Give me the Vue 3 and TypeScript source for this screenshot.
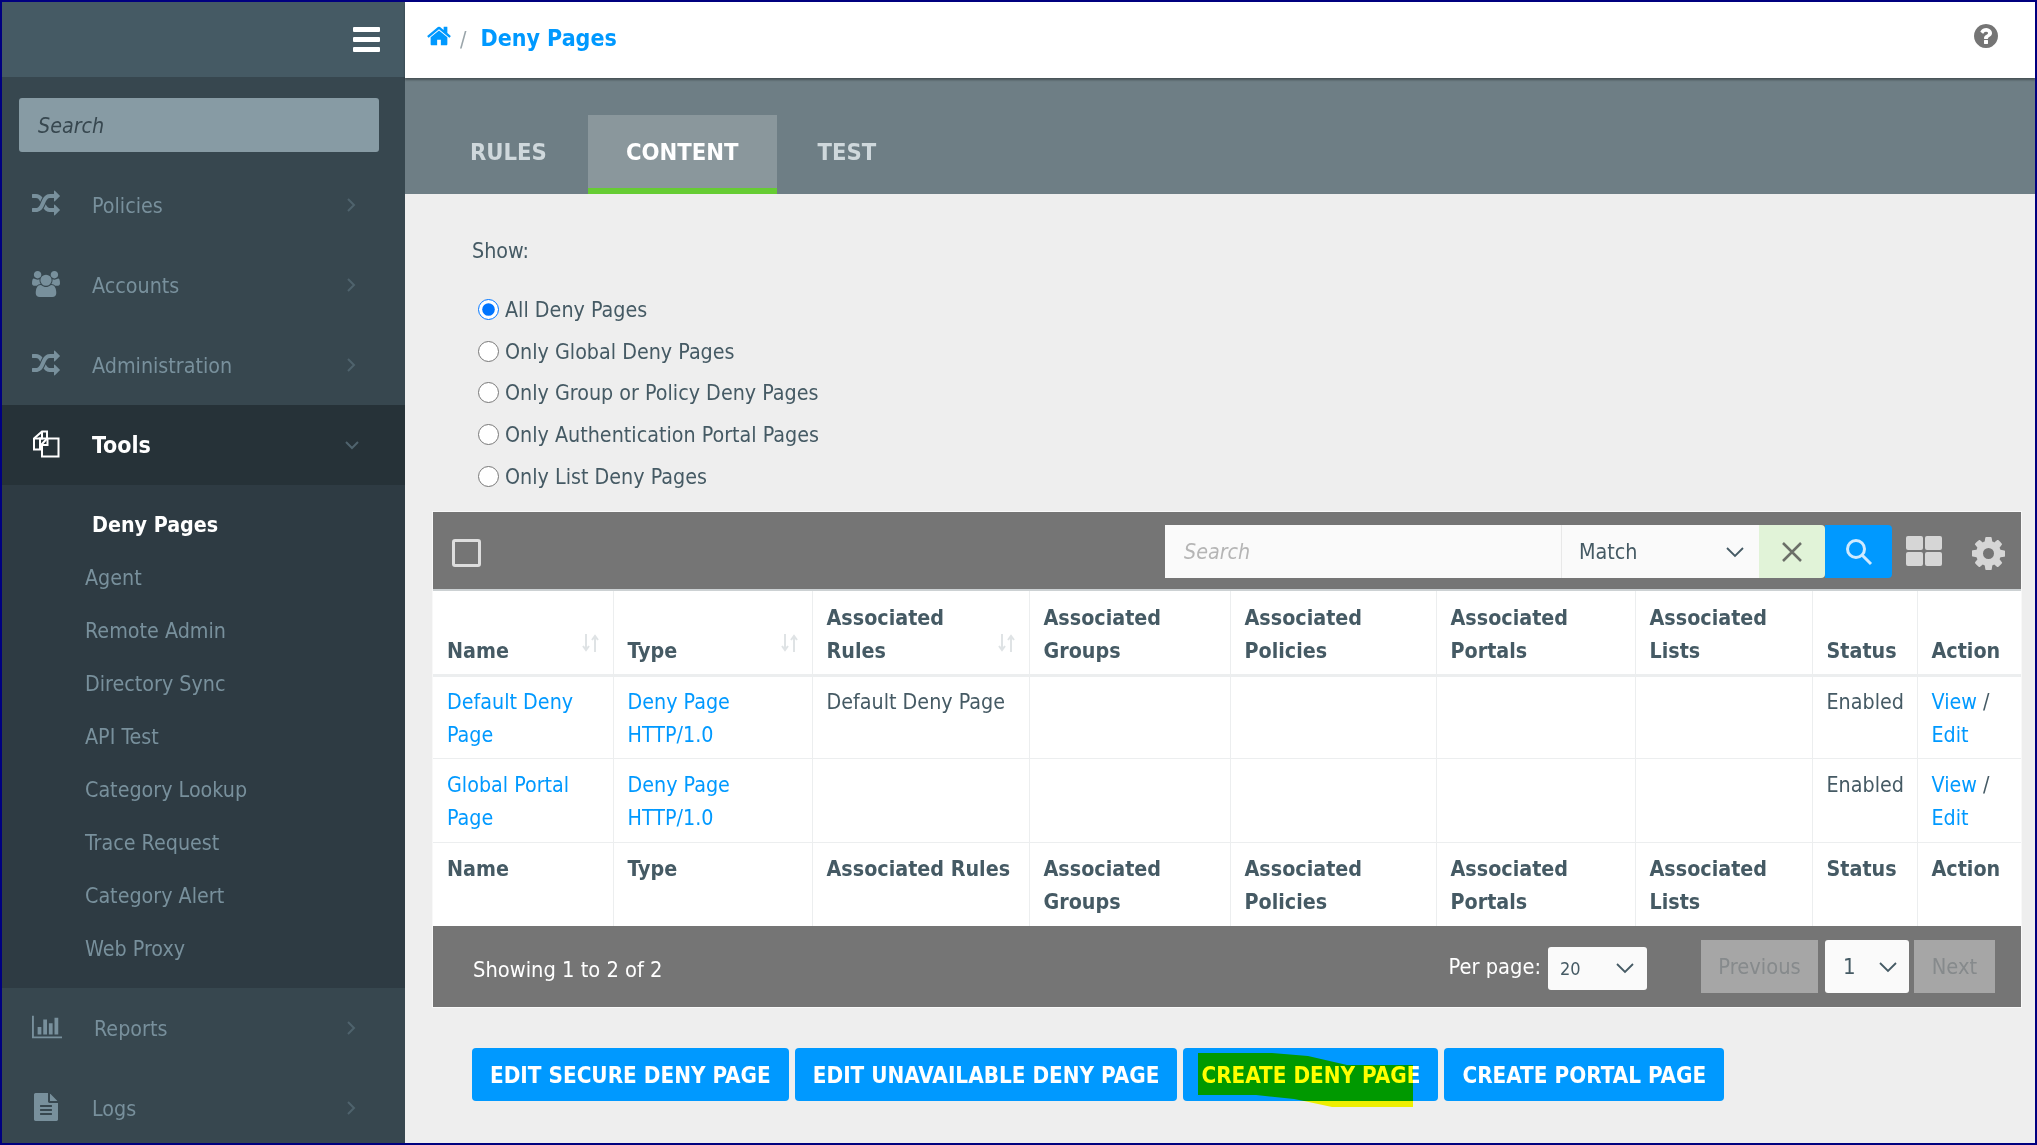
<script setup lang="ts">
const icons: Record<string, { box: string; d: string }> = {
  random: {
    box: '0 0 1792 1792',
    d: 'M666 481q-60 92-137 273-22-45-37-72.500t-40.500-63.500-51-56.500-63-35-81.500-14.500h-224q-14 0-23-9t-9-23v-192q0-14 9-23t23-9h224q250 0 410 225zm1126 799q0 14-9 23l-320 320q-9 9-23 9-13 0-22.500-9.500t-9.500-22.500v-192q-32 0-85 .5t-81 1-73-1-71-5-64-10.500-63-18.500-58-28.500-59-40-55-53.500-56-69.500q59-93 136-273 22 45 37 72.500t40.500 63.500 51 56.500 63 35 81.500 14.500h256v-192q0-14 9-23t23-9q12 0 24 10l319 319q9 9 9 23zm0-896q0 14-9 23l-320 320q-9 9-23 9-13 0-22.500-9.500t-9.500-22.500v-192h-256q-48 0-87 15t-69 45-51 61.500-45 77.500q-32 62-78 171-29 66-49.500 111t-54 105-64 100-74 83-90 68.500-106.500 42-128 16.500h-224q-14 0-23-9t-9-23v-192q0-14 9-23t23-9h224q48 0 87-15t69-45 51-61.500 45-77.500q32-62 78-171 29-66 49.500-111t54-105 64-100 74-83 90-68.500 106.500-42 128-16.500h256v-192q0-14 9-23t23-9q12 0 24 10l319 319q9 9 9 23z',
  },
  users: {
    box: '0 0 1920 1792',
    d: 'M593 896q-162 5-265 128h-134q-82 0-138-40.500t-56-118.500q0-353 124-353 6 0 43.500 21t97.500 42.500 119 21.500q67 0 133-23-5 37-5 66 0 139 81 256zm1071 637q0 120-73 189.500t-194 69.500h-874q-121 0-194-69.500t-73-189.500q0-53 3.500-103.500t14-109 26.500-108.500 43-97.500 62-81 85.500-53.500 111.500-20q10 0 43 21.500t73 48 107 48 135 21.500 135-21.500 107-48 73-48 43-21.500q61 0 111.500 20t85.500 53.500 62 81 43 97.500 26.500 108.500 14 109 3.500 103.500zm-1024-1277q0 106-75 181t-181 75-181-75-75-181 75-181 181-75 181 75 75 181zm704 384q0 159-112.500 271.500t-271.500 112.500-271.500-112.500-112.500-271.500 112.500-271.500 271.500-112.500 271.500 112.500 112.500 271.500zm576 225q0 78-56 118.500t-138 40.500h-134q-103-123-265-128 81-117 81-256 0-29-5-66 66 23 133 23 59 0 119-21.500t97.500-42.500 43.500-21q124 0 124 353zm-128-609q0 106-75 181t-181 75-181-75-75-181 75-181 181-75 181 75 75 181z',
  },
  chart: {
    box: '0 0 2048 1792',
    d: 'M640 896v512h-256v-512h256zm384-512v1024h-256v-1024h256zm1024 1152v128h-2048v-1536h128v1408h1920zm-640-896v768h-256v-768h256zm384-384v1152h-256v-1152h256z',
  },
  file: {
    box: '0 0 1792 1792',
    d: 'M1596 476q14 14 28 36h-472v-472q22 14 36 28zm-476 164h544v1056q0 40-28 68t-68 28h-1344q-40 0-68-28t-28-68v-1600q0-40 28-68t68-28h800v544q0 40 28 68t68 28zm160 736v-64q0-14-9-23t-23-9h-704q-14 0-23 9t-9 23v64q0 14 9 23t23 9h704q14 0 23-9t9-23zm0-256v-64q0-14-9-23t-23-9h-704q-14 0-23 9t-9 23v64q0 14 9 23t23 9h704q14 0 23-9t9-23zm0-256v-64q0-14-9-23t-23-9h-704q-14 0-23 9t-9 23v64q0 14 9 23t23 9h704q14 0 23-9t9-23z',
  },
}

const homePath = 'M1472 992v480q0 26-19 45t-45 19h-384v-384h-256v384h-384q-26 0-45-19t-19-45v-480q0-1 .5-3t.5-3l575-474 575 474q1 2 1 6zm223-69l-62 74q-8 9-21 11h-3q-13 0-21-7l-692-577-692 577q-12 8-24 7-13-2-21-11l-62-74q-8-10-7-23.500t11-21.500l719-599q32-26 76-26t76 26l244 204v-195q0-14 9-23t23-9h192q14 0 23 9t9 23v408l219 182q10 8 11 21.500t-7 23.500z'
const helpPath = 'M1024 1376v-192q0-14-9-23t-23-9h-192q-14 0-23 9t-9 23v192q0 14 9 23t23 9h192q14 0 23-9t9-23zm256-672q0-88-55.500-163t-138.500-116-170-41q-243 0-371 213-15 24 8 42l132 100q7 6 19 6 16 0 25-12 53-68 86-92 34-24 86-24 48 0 85.500 26t37.500 59q0 38-20 61t-68 45q-63 28-115.500 86.500t-52.500 125.500v36q0 14 9 23t23 9h192q14 0 23-9t9-23q0-19 21.500-49.500t54.500-49.500q32-18 49-28.500t46-35 44.500-48 28-60.500 12.500-81zm384 192q0 209-103 385.500t-279.500 279.500-385.500 103-385.500-103-279.500-279.500-103-385.500 103-385.500 279.500-279.500 385.500-103 385.500 103 279.500 279.500 103 385.500z'
const gearPath = 'M1152 896q0-106-75-181t-181-75-181 75-75 181 75 181 181 75 181-75 75-181zm512-109v222q0 12-8 23t-20 13l-185 28q-19 54-39 91 35 50 107 138 10 12 10 25t-9 23q-27 37-99 108t-94 71q-12 0-26-9l-138-108q-44 23-91 38-16 136-29 186-7 28-36 28h-222q-14 0-24.500-8.500t-11.500-21.500l-28-184q-49-16-90-37l-141 107q-10 9-25 9-14 0-25-11-126-114-165-168-7-10-7-23 0-12 8-23 15-21 51-66.500t54-70.500q-27-50-41-99l-183-27q-13-2-21-12.500t-8-23.500v-222q0-12 8-23t19-13l186-28q14-46 39-92-40-57-107-138-10-12-10-24 0-10 9-23 26-36 98.500-107.500t94.500-71.500q13 0 26 10l138 107q44-23 91-38 16-136 29-186 7-28 36-28h222q14 0 24.500 8.500t11.500 21.500l28 184q49 16 90 37l142-107q9-9 24-9 13 0 25 10 129 119 165 170 7 8 7 22 0 12-8 23-15 21-51 66.500t-54 70.500q26 50 41 98l183 28q13 2 21 12.500t8 23.500z'

const topNav = [
  { label: 'Policies', icon: 'random' },
  { label: 'Accounts', icon: 'users' },
  { label: 'Administration', icon: 'random' },
]
const subNav = ['Agent', 'Remote Admin', 'Directory Sync', 'API Test', 'Category Lookup', 'Trace Request', 'Category Alert', 'Web Proxy']
const bottomNav = [
  { label: 'Reports', icon: 'chart' },
  { label: 'Logs', icon: 'file' },
]
const filters = ['All Deny Pages', 'Only Global Deny Pages', 'Only Group or Policy Deny Pages', 'Only Authentication Portal Pages', 'Only List Deny Pages']
const colWidths = [180, 199, 217, 201, 206, 199, 177, 105, 104]
const rows = [
  { name: 'Default Deny Page', rules: 'Default Deny Page' },
  { name: 'Global Portal Page', rules: '' },
]
const actions = ['Edit Secure Deny Page', 'Edit Unavailable Deny Page', 'Create Deny Page', 'Create Portal Page']
</script>

<template>
  <div class="page">
    <aside class="sidebar">
      <div class="side-top">
        <span class="burger"><i></i><i></i><i></i></span>
      </div>
      <div class="side-search">
        <input type="text" placeholder="Search" />
      </div>
      <a v-for="item in topNav" :key="item.label" class="nav-item">
        <span class="nav-icon"><svg :viewBox="icons[item.icon].box" class="fa"><path :d="icons[item.icon].d" /></svg></span>
        <span class="nav-label">{{ item.label }}</span>
        <svg class="chev" viewBox="0 0 10 16"><path d="M2 2l6 6-6 6" /></svg>
      </a>
      <a class="nav-item active">
        <span class="nav-icon">
          <svg class="files" viewBox="0 0 28 28">
            <path d="M10 1.500h5v7H8v11H2V8.500z" />
            <path d="M10 1.500v7H2" />
            <path d="M15 8.500h5v-0h6.500v18H10v-12.500z" />
            <path d="M15.500 8.500v6.500H10" />
          </svg>
        </span>
        <span class="nav-label">Tools</span>
        <svg class="chev down" viewBox="0 0 16 10"><path d="M2 2l6 6 6-6" /></svg>
      </a>
      <div class="subnav">
        <a class="sub-item current">Deny Pages</a>
        <a v-for="s in subNav" :key="s" class="sub-item">{{ s }}</a>
      </div>
      <a v-for="item in bottomNav" :key="item.label" class="nav-item" :class="item.icon">
        <span class="nav-icon"><svg :viewBox="icons[item.icon].box" class="fa"><path :d="icons[item.icon].d" /></svg></span>
        <span class="nav-label">{{ item.label }}</span>
        <svg class="chev" viewBox="0 0 10 16"><path d="M2 2l6 6-6 6" /></svg>
      </a>
    </aside>

    <main class="main">
      <header class="topbar">
        <svg class="home" viewBox="0 0 1792 1792"><path :d="homePath" /></svg>
        <span class="slash">/</span>
        <span class="crumb">Deny Pages</span>
        <svg class="help" viewBox="0 0 1792 1792"><path :d="helpPath" /></svg>
      </header>

      <nav class="tabs">
        <a class="tab">RULES</a>
        <a class="tab on">CONTENT</a>
        <a class="tab">TEST</a>
      </nav>

      <section class="content">
        <div class="show">Show:</div>
        <div class="radios">
          <label v-for="(f, i) in filters" :key="f" class="radio">
            <input type="radio" name="show" :checked="i === 0" />
            <span>{{ f }}</span>
          </label>
        </div>

        <div class="panel">
          <div class="toolbar">
            <span class="check"></span>
            <div class="searchgroup">
              <input class="tsearch" type="text" placeholder="Search" />
              <div class="match">
                <span>Match</span>
                <svg viewBox="0 0 20 12"><path d="M2 2l8 8 8-8" /></svg>
              </div>
              <button class="clear">
                <svg viewBox="0 0 22 22"><path d="M2 2l18 18M20 2L2 20" /></svg>
              </button>
              <button class="go">
                <svg viewBox="0 0 30 30"><circle cx="12" cy="12" r="8.500" /><path d="M18 18l9 9" /></svg>
              </button>
            </div>
            <span class="grid-ic"><i></i><i></i><i></i><i></i></span>
            <svg class="gear" viewBox="128 128 1536 1536"><path :d="gearPath" /></svg>
          </div>

          <table>
            <colgroup>
              <col v-for="(w, i) in colWidths" :key="i" :style="{ width: w + 'px' }" />
            </colgroup>
            <thead>
              <tr>
                <th>Name<svg class="sort" viewBox="0 0 17 18"><path d="M4 0v15M1 12l3 4 3-4M13 18V3M10 6l3-4 3 4" /></svg></th>
                <th>Type<svg class="sort" viewBox="0 0 17 18"><path d="M4 0v15M1 12l3 4 3-4M13 18V3M10 6l3-4 3 4" /></svg></th>
                <th>Associated<br />Rules<svg class="sort" viewBox="0 0 17 18"><path d="M4 0v15M1 12l3 4 3-4M13 18V3M10 6l3-4 3 4" /></svg></th>
                <th>Associated<br />Groups</th>
                <th>Associated<br />Policies</th>
                <th>Associated<br />Portals</th>
                <th>Associated<br />Lists</th>
                <th>Status</th>
                <th>Action</th>
              </tr>
            </thead>
            <tbody>
              <tr v-for="r in rows" :key="r.name">
                <td><a>{{ r.name }}</a></td>
                <td><a>Deny Page HTTP/1.0</a></td>
                <td>{{ r.rules }}</td>
                <td></td>
                <td></td>
                <td></td>
                <td></td>
                <td>Enabled</td>
                <td><a>View</a> / <a>Edit</a></td>
              </tr>
            </tbody>
            <tfoot>
              <tr>
                <th>Name</th>
                <th>Type</th>
                <th>Associated Rules</th>
                <th>Associated<br />Groups</th>
                <th>Associated<br />Policies</th>
                <th>Associated<br />Portals</th>
                <th>Associated<br />Lists</th>
                <th>Status</th>
                <th>Action</th>
              </tr>
            </tfoot>
          </table>

          <div class="pager">
            <span class="showing">Showing 1 to 2 of 2</span>
            <span class="perpage">Per page:</span>
            <div class="mini">
              <span>20</span>
              <svg viewBox="0 0 20 12"><path d="M2 2l8 8 8-8" /></svg>
            </div>
            <span class="pbtn prev">Previous</span>
            <div class="mini pagenum">
              <span>1</span>
              <svg viewBox="0 0 20 12"><path d="M2 2l8 8 8-8" /></svg>
            </div>
            <span class="pbtn next">Next</span>
          </div>
        </div>

        <div class="actions">
          <button v-for="a in actions" :key="a" class="action">{{ a }}</button>
        </div>

        <svg class="marker" viewBox="0 0 215 54">
          <polygon points="0,0 74,0 110,3 149,12 215,12 215,54 205,54 134,54 106,48 96,46 58,42 0,42" />
        </svg>
      </section>
    </main>
  </div>
</template>

<style>
html, body {
  margin: 0;
  background: #eee;
}
</style>

<style scoped>
* {
  box-sizing: border-box;
}
.page {
  width: 2037px;
  height: 1145px;
  border: 2px solid #00007f;
  display: flex;
  overflow: hidden;
  font-family: "DejaVu Sans", Verdana, sans-serif;
  font-stretch: condensed;
  font-size: 21.300px;
  color: #455a64;
  background: #eee;
}

.sidebar {
  width: 403px;
  flex: none;
  background: #37474f;
  display: flex;
  flex-direction: column;
  color: #78909c;
  overflow: hidden;
}
.side-top {
  height: 75px;
  flex: none;
  background: #455a64;
  display: flex;
  align-items: center;
  justify-content: flex-end;
  padding-right: 25px;
}
.burger {
  width: 27px;
  display: flex;
  flex-direction: column;
  gap: 5px;
}
.burger i {
  height: 5px;
  background: #fff;
  border-radius: 1px;
}
.side-search {
  padding: 21px 26px 0 17px;
  height: 88px;
  flex: none;
}
.side-search input {
  width: 100%;
  height: 54px;
  border: 0;
  border-radius: 3px;
  background: #879ba4;
  padding: 0 19px;
  font: italic 21.300px "DejaVu Sans", sans-serif;
  font-stretch: condensed;
  outline: none;
}
.side-search input::placeholder {
  color: #37474f;
  opacity: 1;
}
.nav-item {
  height: 80px;
  flex: none;
  display: flex;
  align-items: center;
  padding-left: 30px;
}
.nav-icon {
  width: 60px;
  height: 28px;
  display: flex;
  align-items: center;
  margin-top: -2px;
}
.fa {
  width: 28px;
  height: 28px;
  fill: #78909c;
}
.nav-label {
  flex: 1;
}
.chev {
  width: 10px;
  height: 16px;
  margin-right: 49px;
  fill: none;
  stroke: #4f636d;
  stroke-width: 2;
}
.chev.down {
  width: 16px;
  height: 10px;
  margin-right: 45px;
}
.nav-item.active {
  background: #263238;
  color: #fff;
  font-weight: 700;
  font-size: 23px;
}
.files {
  width: 28px;
  height: 28px;
  fill: none;
  stroke: #fff;
  stroke-width: 2;
}
.subnav {
  background: #2e3b43;
  height: 503px;
  flex: none;
  padding-top: 13px;
}
.sub-item {
  display: block;
  height: 53px;
  line-height: 53px;
  padding-left: 83px;
}
.sub-item.current {
  color: #fff;
  font-weight: 700;
  padding-left: 90px;
}
.nav-item.chart .fa {
  width: 30px;
}
.nav-item.chart .nav-label {
  margin-left: 2px;
}

.main {
  flex: 1;
  min-width: 0;
  display: flex;
  flex-direction: column;
  position: relative;
}
.topbar {
  height: 76px;
  flex: none;
  background: #fff;
  display: flex;
  align-items: center;
  padding: 0 35px 4px 21px;
  box-shadow: 0 2px 2px rgba(0, 0, 0, .35);
  position: relative;
}
.home {
  width: 26px;
  height: 26px;
  fill: #0099ff;
  margin-top: -4px;
}
.slash {
  color: #9aa5aa;
  margin: 2px 14px 0 8px;
}
.crumb {
  color: #0099ff;
  font-weight: 700;
  font-size: 23px;
  flex: 1;
}
.help {
  width: 28px;
  height: 28px;
  fill: #757575;
  margin-top: -4px;
}
.tabs {
  height: 116px;
  flex: none;
  background: #6e7e85;
  display: flex;
  align-items: flex-end;
  padding-left: 27px;
  gap: 3px;
}
.tab {
  height: 79px;
  padding: 0 38px 6px;
  display: flex;
  align-items: center;
  font-weight: 700;
  font-size: 23.600px;
  color: #cfd8dc;
}
.tab.on {
  background: #8a979c;
  color: #fff;
  border-bottom: 6px solid #66cc33;
  padding-bottom: 0;
}

.content {
  flex: 1;
  position: relative;
  padding: 0 13px 0 27px;
}
.show {
  margin-left: 40px;
  padding-top: 42px;
  line-height: 30px;
}
.radios {
  margin: 23px 0 0 46px;
  display: flex;
  flex-direction: column;
  height: 212px;
}
.radio {
  height: 41.600px;
  display: flex;
  align-items: center;
  flex: none;
}
.radio input {
  width: 21px;
  height: 21px;
  margin: 0 6px 0 0;
  accent-color: #0075ff;
}
.panel {
  border: 1px solid #f8f8f8;
  background: #fff;
  margin-top: 10px;
}
.toolbar {
  height: 79px;
  background: #757575;
  border-bottom: 2px solid #ccd1d3;
  display: flex;
  align-items: center;
  padding: 0 16px 0 19px;
}
.check {
  width: 29px;
  height: 28px;
  border: 3px solid #ddd;
  border-radius: 3px;
  margin-right: auto;
  margin-top: 4px;
}
.searchgroup {
  display: flex;
  height: 53px;
  margin-top: 2px;
}
.tsearch {
  width: 397px;
  height: 53px;
  border: 0;
  border-right: 1px solid #e8e8e8;
  background: #fafafa;
  padding: 0 19px;
  font: italic 21.300px "DejaVu Sans", sans-serif;
  font-stretch: condensed;
  outline: none;
}
.tsearch::placeholder {
  color: #b5b5b5;
  opacity: 1;
}
.match {
  width: 197px;
  background: #fafafa;
  display: flex;
  align-items: center;
  justify-content: space-between;
  padding: 0 14px 0 17px;
}
.match svg, .mini svg {
  width: 20px;
  height: 12px;
  fill: none;
  stroke: #455a64;
  stroke-width: 1.800;
}
.clear {
  width: 66px;
  border: 0;
  background: #e1f3d8;
  border-radius: 0 4px 4px 0;
  display: flex;
  align-items: center;
  justify-content: center;
  padding: 0;
}
.clear svg {
  width: 22px;
  height: 22px;
  fill: none;
  stroke: #6b6f68;
  stroke-width: 2.500;
}
.go {
  width: 67px;
  border: 0;
  background: #0099ff;
  border-radius: 0 4px 4px 0;
  display: flex;
  align-items: center;
  justify-content: center;
  padding: 0;
}
.go svg {
  width: 30px;
  height: 30px;
  fill: none;
  stroke: #cfeaff;
  stroke-width: 3;
}
.grid-ic {
  margin-left: 14px;
  width: 36px;
  height: 30px;
  display: grid;
  grid-template-columns: 1fr 1fr;
  grid-template-rows: 1fr 1fr;
  gap: 2px;
}
.grid-ic i {
  background: #d6d6d6;
  border-radius: 2px;
}
.gear {
  width: 33px;
  height: 33px;
  margin-left: 30px;
  margin-top: 5px;
  fill: #d6d6d6;
}
table {
  width: 100%;
  table-layout: fixed;
  border-collapse: collapse;
  line-height: 33px;
}
th {
  text-align: left;
  vertical-align: bottom;
  padding: 9px 6px 8px 14px;
  font-weight: 700;
  border-left: 1px solid #eceeef;
  position: relative;
}
th:first-child, td:first-child {
  border-left: 0;
}
thead th {
  border-bottom: 3px solid #eceeef;
  padding: 10px 6px 7px 14px;
}
td {
  vertical-align: top;
  padding: 9px 6px 8px 14px;
  border-left: 1px solid #eceeef;
  border-bottom: 1px solid #eceeef;
}
tbody tr:first-child td {
  padding: 8px 6px 7px 14px;
}
td a {
  color: #0099ff;
}
.sort {
  position: absolute;
  right: 14px;
  bottom: 22px;
  width: 17px;
  height: 18px;
  fill: none;
  stroke: #dfe3e5;
  stroke-width: 2;
}
tfoot th {
  vertical-align: top;
}
.pager {
  height: 81px;
  background: #757575;
  display: flex;
  align-items: center;
  padding: 0 26px 0 40px;
  color: #fff;
  font-size: 21.700px;
}
.showing {
  margin-right: auto;
  margin-top: 6px;
}
.perpage {
  margin: 0 7px 0 0;
}
.mini {
  width: 99px;
  height: 43px;
  background: #fafafa;
  border-radius: 3px;
  display: flex;
  align-items: center;
  justify-content: space-between;
  padding: 0 12px;
  color: #455a64;
  font-size: 18px;
  margin-top: 3px;
}
.pbtn {
  height: 53px;
  background: #a6a6a6;
  color: #868a8c;
  display: flex;
  align-items: center;
  justify-content: center;
}
.prev {
  width: 117px;
  margin-left: 54px;
}
.next {
  width: 81px;
  margin-left: 5px;
}
.mini.pagenum {
  width: 84px;
  height: 53px;
  margin-left: 7px;
  margin-top: 0;
  font-size: 22px;
  padding: 0 11px 0 18px;
}
.actions {
  display: flex;
  gap: 6px;
  margin: 40px 0 0 40px;
}
.action {
  height: 53px;
  border: 0;
  border-radius: 4px;
  background: #0099ff;
  color: #fff;
  font: 700 22.300px "DejaVu Sans", sans-serif;
  font-stretch: condensed;
  text-transform: uppercase;
  padding: 0 18px;
  white-space: nowrap;
}
/* highlighter stroke drawn over the third button */
.marker {
  position: absolute;
  left: 793px;
  top: 859px;
  width: 215px;
  height: 54px;
  fill: #ffff00;
  mix-blend-mode: multiply;
  pointer-events: none;
}
</style>
